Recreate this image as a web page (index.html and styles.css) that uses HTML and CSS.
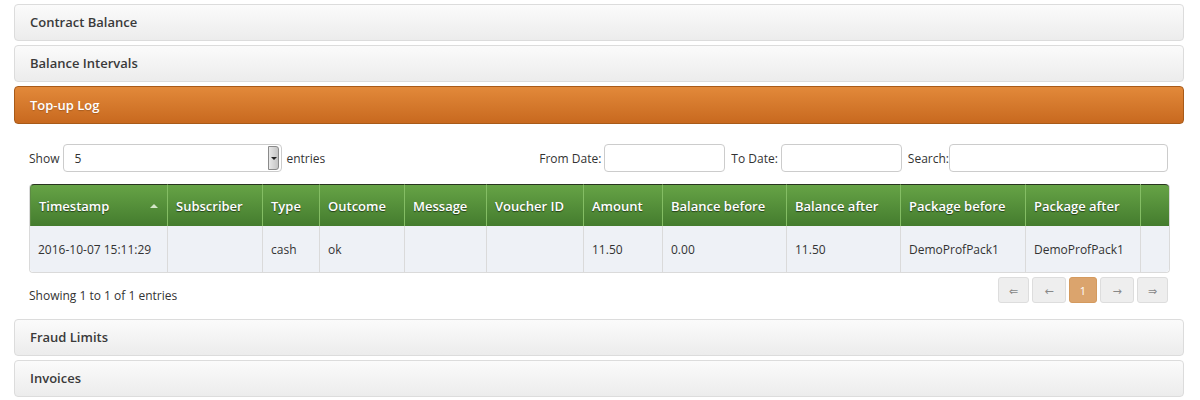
FILE: index.html
```html
<!DOCTYPE html>
<html lang="en">
<head>
    <meta charset="UTF-8">
    <title>Top-up Log</title>
    <link rel="stylesheet" href="styles.css">
</head>
<body>
    <div class="accordion">
        <div class="panel-head">Contract Balance</div>
        <div class="panel-head">Balance Intervals</div>
        <div class="panel-head active">Top-up Log</div>

        <div class="panel-body">
            <div class="controls">
                <div class="length">
                    <span>Show</span>
                    <div class="select">
                        <span class="select-value">5</span>
                        <span class="select-arrow"></span>
                    </div>
                    <span>entries</span>
                </div>
                <div class="filters">
                    <label>From Date:</label>
                    <input type="text" class="date-input">
                    <label>To Date:</label>
                    <input type="text" class="date-input">
                    <label class="search-label">Search:</label>
                    <input type="text" class="search-input">
                </div>
            </div>

            <table class="log-table">
                <colgroup>
                    <col style="width:137px"><col style="width:95px"><col style="width:57px">
                    <col style="width:85px"><col style="width:82px"><col style="width:97px">
                    <col style="width:79px"><col style="width:124px"><col style="width:114px">
                    <col style="width:125px"><col style="width:115px"><col style="width:29px">
                </colgroup>
                <thead>
                    <tr>
                        <th class="sorted">Timestamp</th>
                        <th>Subscriber</th>
                        <th>Type</th>
                        <th>Outcome</th>
                        <th>Message</th>
                        <th>Voucher ID</th>
                        <th>Amount</th>
                        <th>Balance before</th>
                        <th>Balance after</th>
                        <th>Package before</th>
                        <th>Package after</th>
                        <th></th>
                    </tr>
                </thead>
                <tbody>
                    <tr>
                        <td>2016-10-07 15:11:29</td>
                        <td></td>
                        <td>cash</td>
                        <td>ok</td>
                        <td></td>
                        <td></td>
                        <td>11.50</td>
                        <td>0.00</td>
                        <td>11.50</td>
                        <td>DemoProfPack1</td>
                        <td>DemoProfPack1</td>
                        <td></td>
                    </tr>
                </tbody>
            </table>

            <div class="table-footer">
                <div class="info">Showing 1 to 1 of 1 entries</div>
                <div class="pager">
                    <span class="page-btn wide">&lArr;</span>
                    <span class="page-btn">&larr;</span>
                    <span class="page-btn current">1</span>
                    <span class="page-btn">&rarr;</span>
                    <span class="page-btn wide">&rArr;</span>
                </div>
            </div>
        </div>

        <div class="panel-head">Fraud Limits</div>
        <div class="panel-head">Invoices</div>
    </div>
</body>
</html>
```

FILE: styles.css
```css
* {
    box-sizing: border-box;
}

body {
    margin: 0;
    font-family: 'Open Sans', 'DejaVu Sans', sans-serif;
    font-size: 12px;
    color: #333;
    background-color: #fff;
}

.accordion {
    padding: 4px 16px 0 14px;
}

.panel-head {
    height: 37px;
    line-height: 35px;
    padding: 0 15px;
    margin-bottom: 4px;
    font-size: 13px;
    font-weight: 600;
    color: #3a3a3a;
    background: linear-gradient(to bottom, #fbfbfb, #ececec);
    border: 1px solid #dcdcdc;
    border-radius: 4px;
}

.panel-head.active {
    height: 38px;
    line-height: 36px;
    margin-bottom: 0;
    color: #fff;
    text-shadow: 0 1px 1px rgba(0, 0, 0, 0.2);
    background: linear-gradient(to bottom, #e2893a, #c8691f);
    border-color: #a85a18;
}

.panel-body {
    padding: 20px 16px 15px 15px;
}

.controls {
    display: flex;
    justify-content: space-between;
    align-items: center;
    height: 28px;
    margin-bottom: 12px;
}

.length {
    display: flex;
    align-items: center;
    gap: 4px;
}

.select {
    display: flex;
    align-items: center;
    width: 219px;
    height: 28px;
    padding: 0 2px 0 10px;
    border: 1px solid #ccc;
    border-radius: 4px;
}

.select-value {
    flex: 1;
}

.select-arrow {
    position: relative;
    width: 11px;
    height: 24px;
    background: linear-gradient(to right, #e8e8e8, #c4c4c4);
    border: 1px solid #8a8a8a;
    border-radius: 0 3px 3px 0;
}

.select-arrow::after {
    content: '';
    position: absolute;
    left: 2px;
    top: 10px;
    border-left: 3px solid transparent;
    border-right: 3px solid transparent;
    border-top: 3px solid #222;
}

.filters {
    display: flex;
    align-items: center;
}

.filters label {
    margin-right: 3px;
}

.date-input,
.search-input {
    height: 28px;
    border: 1px solid #ccc;
    border-radius: 4px;
    margin: 0 6px 0 0;
    padding: 0 6px;
}

.date-input {
    width: 121px;
}

.search-input {
    width: 219px;
    margin-right: 0;
}

.filters .search-label {
    margin-right: 0;
}

.log-table {
    width: 1139px;
    table-layout: fixed;
    border-collapse: separate;
    border-spacing: 0;
    border: 1px solid #dadada;
    border-top: none;
    border-radius: 4px;
}

.log-table th {
    height: 42px;
    padding: 0 8px;
    text-align: left;
    font-size: 13px;
    font-weight: 600;
    color: #fff;
    text-shadow: 0 1px 1px rgba(0, 0, 0, 0.55);
    background: linear-gradient(to bottom, #66a346, #447c2e);
    border-top: 1px solid #28351f;
    border-left: 1px solid #84bd64;
    white-space: nowrap;
}

.log-table th:first-child {
    border-top-left-radius: 4px;
    border-left-color: #5d8c44;
}

.log-table th:last-child {
    border-top-right-radius: 4px;
}

.log-table th.sorted {
    position: relative;
}

.log-table th.sorted::after {
    content: '';
    position: absolute;
    right: 9px;
    top: 19px;
    border-left: 4px solid transparent;
    border-right: 4px solid transparent;
    border-bottom: 4px solid #d4e6c8;
}

.log-table td {
    height: 46px;
    padding: 0 8px;
    background-color: #eef1f6;
    border-left: 1px solid #dadada;
    white-space: nowrap;
}

.log-table td:first-child {
    border-left: none;
    border-bottom-left-radius: 4px;
}

.log-table td:last-child {
    border-bottom-right-radius: 4px;
}

.table-footer {
    display: flex;
    justify-content: space-between;
    align-items: flex-start;
    padding-top: 4px;
}

.info {
    padding-top: 10px;
}

.pager {
    display: flex;
    gap: 3px;
}

.page-btn {
    display: flex;
    align-items: center;
    justify-content: center;
    width: 34px;
    height: 26px;
    font-size: 11px;
    color: #888;
    background-color: #eee;
    border: 1px solid #ddd;
    border-radius: 3px;
}

.page-btn.wide {
    width: 31px;
}

.page-btn.current {
    width: 28px;
    color: #fff;
    background-color: #dba46d;
    border-color: #d49a5e;
}
```
